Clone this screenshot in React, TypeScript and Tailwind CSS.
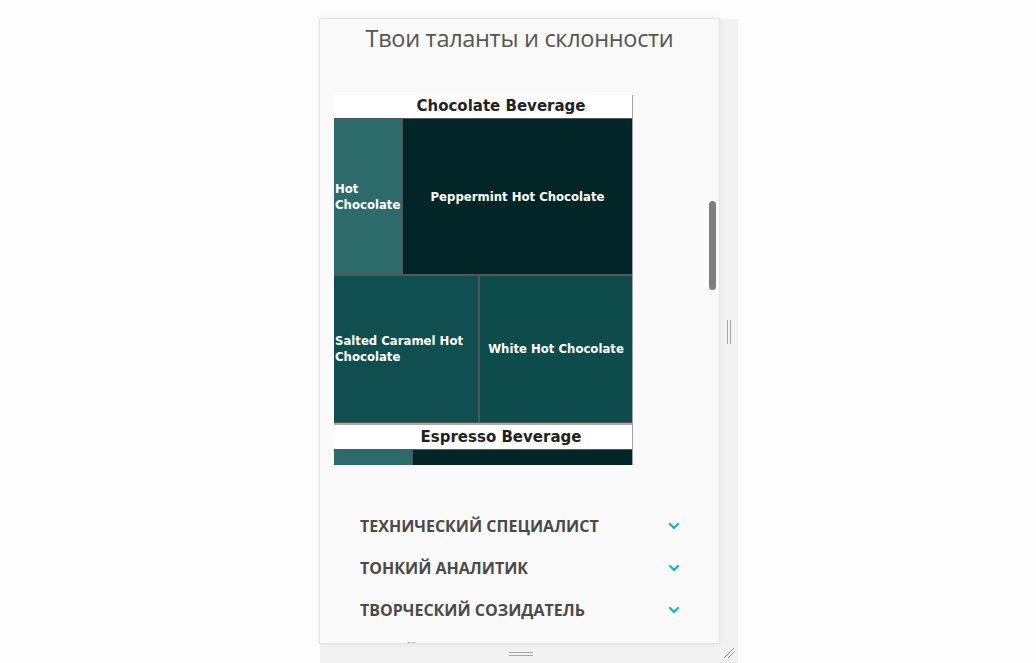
import { ChevronDown } from "lucide-react";

const talents = [
  "Технический специалист",
  "Тонкий аналитик",
  "Творческий созидатель",
  "Яркий лидер",
];

function Cell({
  label,
  color,
  align = "center",
  className = "",
}: {
  label?: string;
  color: string;
  align?: "center" | "left";
  className?: string;
}) {
  return (
    <div
      className={`${color} ${className} flex items-center ${
        align === "center" ? "justify-center text-center" : "justify-start text-left pl-[1px]"
      } text-white font-bold text-[13px] leading-[16px] font-['DejaVu_Sans_Condensed','DejaVu_Sans',sans-serif]`}
    >
      {label}
    </div>
  );
}

function Treemap() {
  return (
    <div className="w-[299px] h-[370px] overflow-hidden border-r border-[#a3a3a3] bg-white font-['DejaVu_Sans',sans-serif]">
      <div className="h-[23px] flex items-center justify-center pl-[36px] text-[15px] font-bold text-[#222]">
        Chocolate Beverage
      </div>
      <div className="bg-[#555] pt-[1px] pb-[1px] flex flex-col gap-[2px]">
        <div className="h-[155px] flex gap-[1px]">
          <Cell label="Hot Chocolate" color="bg-[#2d6b6b]" align="left" className="w-[68px]" />
          <Cell label="Peppermint Hot Chocolate" color="bg-[#022628]" className="flex-1" />
        </div>
        <div className="h-[146px] flex gap-[2px]">
          <Cell label="Salted Caramel Hot Chocolate" color="bg-[#0f4f4f]" align="left" className="w-[144px]" />
          <Cell label="White Hot Chocolate" color="bg-[#0e4c4c]" className="flex-1" />
        </div>
      </div>
      <div className="h-[2px] bg-[#aaa]" />
      <div className="h-[24px] flex items-center justify-center pl-[36px] text-[15px] font-bold text-[#222]">
        Espresso Beverage
      </div>
      <div className="bg-[#555] pt-[1px] flex gap-[1px] h-[60px]">
        <div className="w-[78px] bg-[#2d6b6b]" />
        <div className="flex-1 bg-[#022628]" />
      </div>
    </div>
  );
}

export default function App() {
  return (
    <div className="w-full h-[663px] bg-[#fdfdfd] flex overflow-hidden pl-[320px] pt-[19px]">
      <div className="w-[418px] h-[644px] bg-[#f2f2f2] flex flex-col">
        <div className="flex h-[626px]">
          {/* preview frame */}
          <div className="relative w-[401px] h-[626px] -mt-[1px] -ml-[1px] bg-[#fafafa] border border-[#e3e3e3] shadow-[0_0_6px_rgba(0,0,0,0.06)] overflow-hidden">
            <h2 className="pt-[4px] text-center text-[23.5px] leading-[30px] text-[#555] font-['Open_Sans',sans-serif] tracking-[-0.3px]">
              Твои таланты и склонности
            </h2>
            <div className="mt-[42px] pl-[14px]">
              <Treemap />
            </div>
            <div className="mt-[40px] flex flex-col">
              {talents.map((t) => (
                <div key={t} className="h-[42px] flex items-center pl-[40px] pr-[37px]">
                  <span className="flex-1 uppercase font-bold text-[16px] text-[#4a4a4a] font-['Open_Sans',sans-serif]">
                    {t}
                  </span>
                  <ChevronDown className="w-[16px] h-[16px] text-[#1ab3cc]" strokeWidth={3.5} />
                </div>
              ))}
            </div>
            {/* scrollbar */}
            <div className="absolute right-[3px] top-[182px] w-[7px] h-[89px] rounded-full bg-[#7f7f7f]" />
          </div>
          {/* right resize strip */}
          <div className="flex-1 flex items-center justify-center">
            <div className="flex gap-[2px] h-[24px]">
              <div className="w-[1px] bg-[#a8a8a8]" />
              <div className="w-[1px] bg-[#a8a8a8]" />
            </div>
          </div>
        </div>
        {/* bottom resize strip */}
        <div className="flex-1 flex items-center relative">
          <div className="w-[401px] flex justify-center">
            <div className="flex flex-col gap-[2px] w-[24px]">
              <div className="h-[1px] bg-[#a8a8a8]" />
              <div className="h-[1px] bg-[#a8a8a8]" />
            </div>
          </div>
          <svg className="absolute right-[3px] bottom-[4px]" width="12" height="12" viewBox="0 0 12 12">
            <line x1="1" y1="11" x2="11" y2="1" stroke="#999" strokeWidth="1" />
            <line x1="5" y1="11" x2="11" y2="5" stroke="#999" strokeWidth="1" />
          </svg>
        </div>
      </div>
    </div>
  );
}
